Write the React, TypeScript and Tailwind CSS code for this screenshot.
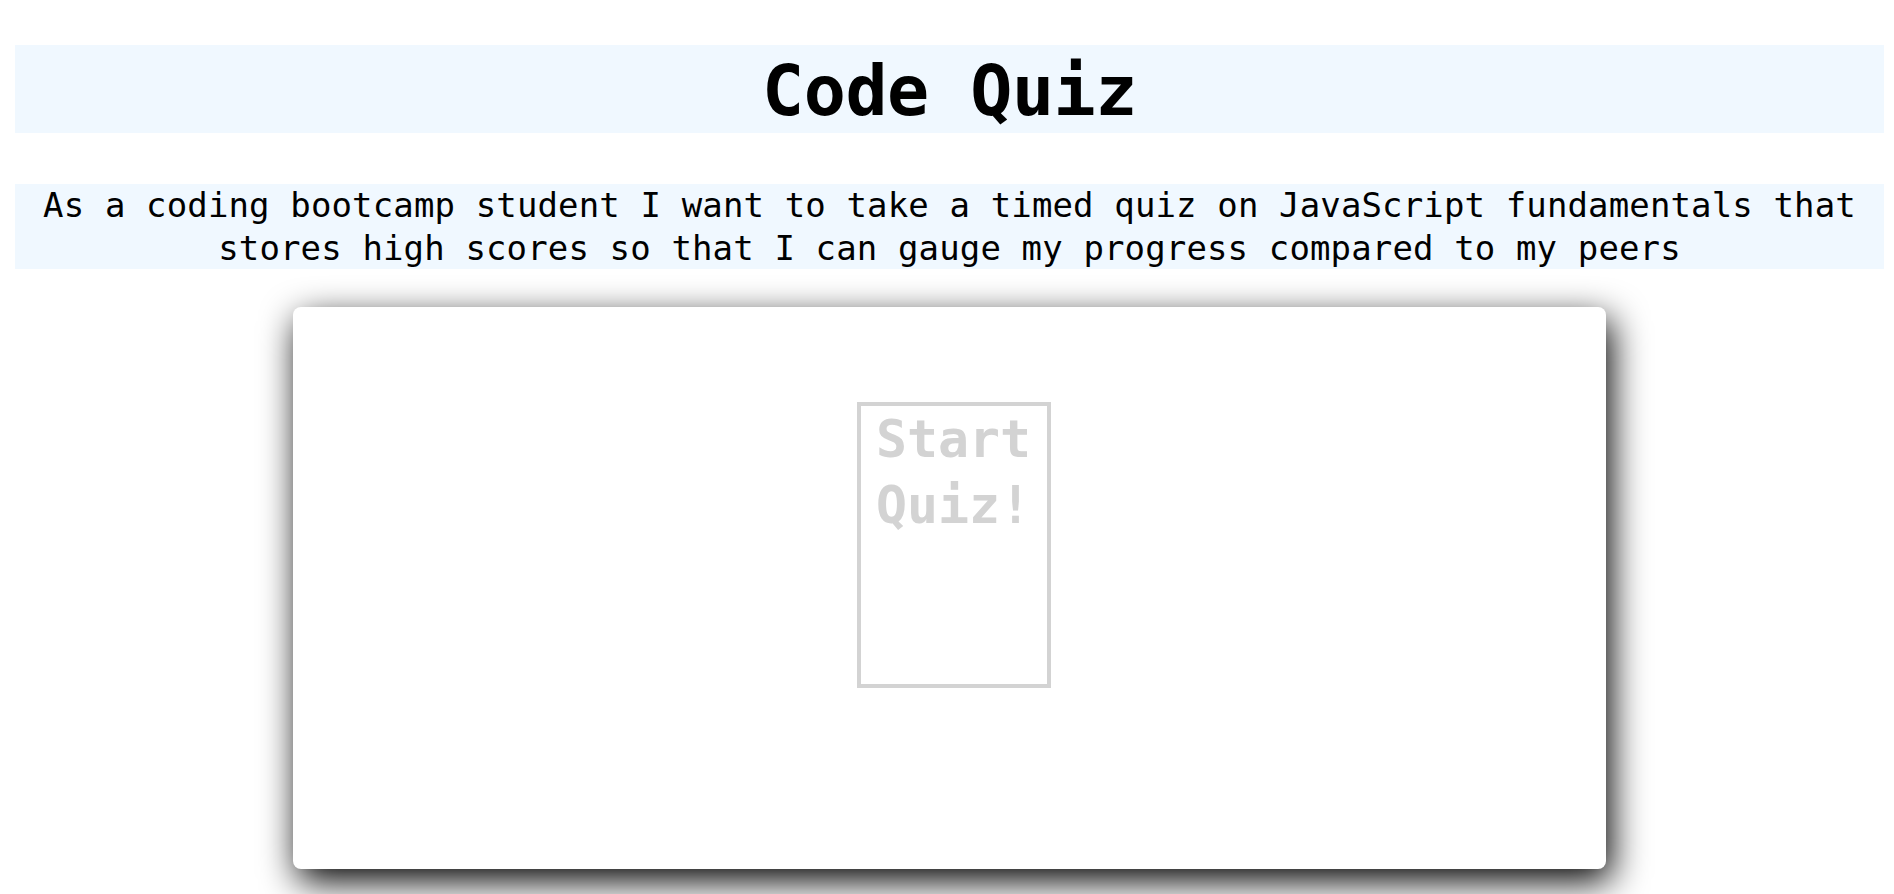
export default function App() {
  return (
    <div className="min-h-screen bg-white pt-[45px] font-['DejaVu_Sans_Mono',monospace] text-black">
      {/* Title */}
      <header className="ml-[15px] mr-[10px] h-[88px] bg-[#f0f8ff] text-center">
        <h1 className="text-[70px] font-bold leading-[88px] pt-[2px] tracking-[-0.5px]">Code Quiz</h1>
      </header>

      {/* Description */}
      <p className="ml-[15px] mr-[10px] mt-[51px] bg-[#f0f8ff] text-center text-[34px] leading-[42.5px] tracking-[0.13px]">
        As a coding bootcamp student I want to take a timed quiz on JavaScript fundamentals that stores high scores so
        that I can gauge my progress compared to my peers
      </p>

      {/* Quiz card */}
      <main className="ml-[293px] mt-[38px] flex h-[562px] w-[1313px] flex-col items-center rounded-lg bg-white pt-[95px] shadow-[5px_12px_36px_#000]">
        <button className="ml-[8px] flex h-[286px] w-[194px] flex-col items-center justify-start border-4 border-[#d3d3d3] bg-white text-center text-[51.5px] font-bold leading-[66px] text-[#d3d3d3]">
          <span>Start</span>
          <span>Quiz!</span>
        </button>
      </main>
    </div>
  );
}
